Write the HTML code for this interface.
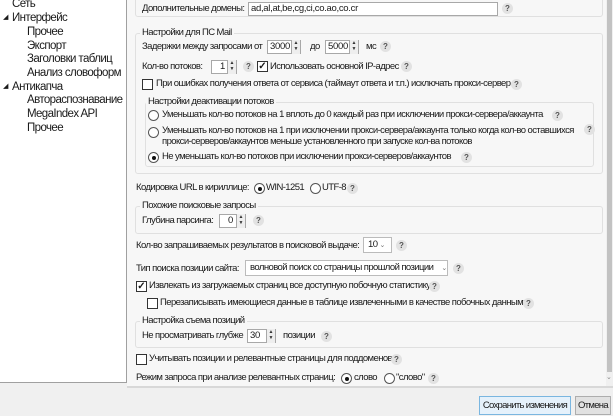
<!DOCTYPE html>
<html><head><meta charset="utf-8"><style>
*{box-sizing:border-box;margin:0;padding:0}
body{width:613px;height:416px;overflow:hidden;background:#f0f0f0;font-family:"Liberation Sans",sans-serif;font-size:9.5px;letter-spacing:-0.58px;color:#1a1a1a;position:relative}
.a{position:absolute;white-space:nowrap;line-height:12px}
#tree{position:absolute;left:0;top:0;width:127px;height:383px;background:#fff;border-right:1px solid #a0a0a0;border-bottom:1px solid #a0a0a0;font-size:11.5px;letter-spacing:-0.6px}
#tree .a{line-height:14px}
#content{position:absolute;left:127px;top:0;width:479px;height:387px;background:#f7f7f7}
.g{position:absolute;border:1px solid #e0e0e0;border-radius:3px}
.gl{position:absolute;background:#f7f7f7;padding:0 2px;line-height:12px;white-space:nowrap}
.in{position:absolute;height:14px;background:#fff;border:1px solid #a8a8a8;line-height:12px;padding:0 2px;white-space:nowrap;letter-spacing:-0.3px}
.q{position:absolute;width:11px;height:11px;border-radius:50%;background:#e2e2e2;color:#555;font-size:8px;font-weight:bold;text-align:center;line-height:11px;letter-spacing:0}
.cb{position:absolute;width:11px;height:11px;border:1px solid #333;background:#fff;font-size:10px;line-height:9px;text-align:center;font-weight:bold;letter-spacing:0}
.rb{position:absolute;width:11px;height:11px;border:1px solid #555;border-radius:50%;background:#fff}
.rb.on::after{content:"";position:absolute;left:2.5px;top:2.5px;width:4px;height:4px;border-radius:50%;background:#111}
.sp{position:absolute;width:9px;height:14px;border-left:1px solid #a8a8a8;right:0;top:-1px;background:#eee;font-size:5px;line-height:6px;text-align:center;color:#333;letter-spacing:0}
.sel{position:absolute;height:16px;background:#fff;border:1px solid #bbb;line-height:14px;padding:0 4px;white-space:nowrap;overflow:hidden}
.btn{position:absolute;height:19px;border:1px solid #adadad;background:#e1e1e1;line-height:17px;text-align:center;font-size:9.5px;white-space:nowrap;letter-spacing:-0.7px;overflow:hidden}
</style></head><body>
<div id="tree">
<div class="a" style="left:12px;top:-3px">Сеть</div>
<div class="a" style="left:3px;top:11px;font-size:7px">◢</div><div class="a" style="left:12px;top:11px">Интерфейс</div>
<div class="a" style="left:27px;top:25px">Прочее</div>
<div class="a" style="left:27px;top:39px">Экспорт</div>
<div class="a" style="left:27px;top:52px">Заголовки таблиц</div>
<div class="a" style="left:27px;top:66px">Анализ словоформ</div>
<div class="a" style="left:3px;top:80px;font-size:7px">◢</div><div class="a" style="left:12px;top:80px">Антикапча</div>
<div class="a" style="left:27px;top:93px">Автораспознавание</div>
<div class="a" style="left:27px;top:107px">MegaIndex API</div>
<div class="a" style="left:27px;top:121px">Прочее</div>
</div>
<div id="content"></div>
<div style="position:absolute;left:606px;top:0;width:7px;height:387px;background:#f0f0f0"><div style="position:absolute;left:1px;top:0;width:5px;height:372px;background:#c2c2c2"></div><div class="a" style="left:0;top:372px;font-size:7px;color:#888">⌄</div></div>
<div style="position:absolute;left:127px;top:386px;width:486px;height:2px;background:#d8d8d8"></div>

<div class="g" style="left:135px;top:-4px;width:468px;height:21px"></div>
<div class="a" style="left:142px;top:3px">Дополнительные домены:</div>
<div class="in" style="left:248px;top:2px;width:250px">ad,al,at,be,cg,ci,co.ao,co.cr</div>
<div class="q" style="left:502px;top:3px">?</div>

<div class="g" style="left:135px;top:33px;width:468px;height:141px"></div>
<div class="gl" style="left:140px;top:27px">Настройки для ПС Mail</div>
<div class="a" style="left:142px;top:41px">Задержки между запросами от</div>
<div class="in" style="left:267px;top:40px;width:34px">3000<div class="sp">▲<br>▼</div></div>
<div class="a" style="left:310px;top:41px">до</div>
<div class="in" style="left:325px;top:40px;width:34px">5000<div class="sp">▲<br>▼</div></div>
<div class="a" style="left:366px;top:41px">мс</div><div class="q" style="left:380px;top:41px">?</div>
<div class="a" style="left:142px;top:61px">Кол-во потоков:</div>
<div class="in" style="left:211px;top:60px;width:26px;padding-left:8px">1<div class="sp">▲<br>▼</div></div>
<div class="q" style="left:243px;top:61px">?</div>
<div class="cb" style="left:257px;top:61px">✓</div><div class="a" style="left:270px;top:61px">Использовать основной IP-адрес</div><div class="q" style="left:401px;top:61px">?</div>
<div class="cb" style="left:142px;top:79px"></div><div class="a" style="left:156px;top:78px">При ошибках получения ответа от сервиса (таймаут ответа и т.п.) исключать прокси-сервер</div><div class="q" style="left:511px;top:79px">?</div>

<div class="g" style="left:145px;top:102px;width:449px;height:65px"></div>
<div class="gl" style="left:146px;top:96px">Настройки деактивации потоков</div>
<div class="rb" style="left:148px;top:110px"></div><div class="a" style="left:162px;top:109px">Уменьшать кол-во потоков на 1 вплоть до 0 каждый раз при исключении прокси-сервера/аккаунта</div><div class="q" style="left:552px;top:110px">?</div>
<div class="rb" style="left:148px;top:127px"></div><div class="a" style="left:162px;top:125px">Уменьшать кол-во потоков на 1 при исключении прокси-сервера/аккаунта только когда кол-во оставшихся</div><div class="a" style="left:162px;top:136px">прокси-серверов/аккаунтов меньше установленного при запуске кол-ва потоков</div><div class="q" style="left:584px;top:124px">?</div>
<div class="rb on" style="left:148px;top:152px"></div><div class="a" style="left:162px;top:151px">Не уменьшать кол-во потоков при исключении прокси-серверов/аккаунтов</div><div class="q" style="left:461px;top:152px">?</div>

<div class="a" style="left:136px;top:182px">Кодировка URL в кириллице:</div>
<div class="rb on" style="left:254px;top:183px"></div><div class="a" style="left:266px;top:182px">WIN-1251</div>
<div class="rb" style="left:310px;top:183px"></div><div class="a" style="left:322px;top:182px">UTF-8</div><div class="q" style="left:347px;top:183px">?</div>

<div class="g" style="left:135px;top:206px;width:468px;height:28px"></div>
<div class="gl" style="left:140px;top:200px">Похожие поисковые запросы</div>
<div class="a" style="left:142px;top:215px">Глубина парсинга:</div>
<div class="in" style="left:219px;top:214px;width:27px;padding-left:8px">0<div class="sp">▲<br>▼</div></div>
<div class="q" style="left:253px;top:215px">?</div>

<div class="a" style="left:136px;top:240px">Кол-во запрашиваемых результатов в поисковой выдаче:</div>
<div class="sel" style="left:363px;top:237px;width:29px">10 <span style="font-size:7px;color:#777">⌄</span></div><div class="q" style="left:396px;top:240px">?</div>
<div class="a" style="left:136px;top:263px">Тип поиска позиции сайта:</div>
<div class="sel" style="left:245px;top:260px;width:203px">волновой поиск со страницы прошлой позиции <span style="font-size:7px;color:#777;margin-left:6px">⌄</span></div><div class="q" style="left:453px;top:263px">?</div>
<div class="cb" style="left:136px;top:281px">✓</div><div class="a" style="left:149px;top:280px">Извлекать из загружаемых страниц все доступную побочную статистику</div><div class="q" style="left:429px;top:281px">?</div>
<div class="cb" style="left:147px;top:298px"></div><div class="a" style="left:160px;top:297px">Перезаписывать имеющиеся данные в таблице извлеченными в качестве побочных данными</div><div class="q" style="left:523px;top:298px">?</div>

<div class="g" style="left:135px;top:321px;width:468px;height:27px"></div>
<div class="gl" style="left:140px;top:315px">Настройка съема позиций</div>
<div class="a" style="left:142px;top:330px">Не просматривать глубже</div>
<div class="in" style="left:247px;top:329px;width:29px">30<div class="sp">▲<br>▼</div></div>
<div class="a" style="left:283px;top:330px">позиции</div><div class="q" style="left:321px;top:331px">?</div>

<div class="cb" style="left:136px;top:354px"></div><div class="a" style="left:149px;top:353px">Учитывать позиции и релевантные страницы для поддоменов</div><div class="q" style="left:391px;top:354px">?</div>
<div class="a" style="left:136px;top:372px">Режим запроса при анализе релевантных страниц:</div>
<div class="rb on" style="left:341px;top:373px"></div><div class="a" style="left:354px;top:372px">слово</div>
<div class="rb" style="left:384px;top:373px"></div><div class="a" style="left:396px;top:372px">"слово"</div><div class="q" style="left:428px;top:373px">?</div>

<div class="btn" style="left:479px;top:396px;width:92px;border-color:#7ab6e0;background:#e5f1fb">Сохранить изменения</div>
<div class="btn" style="left:575px;top:396px;width:36px">Отмена</div>
</body></html>
